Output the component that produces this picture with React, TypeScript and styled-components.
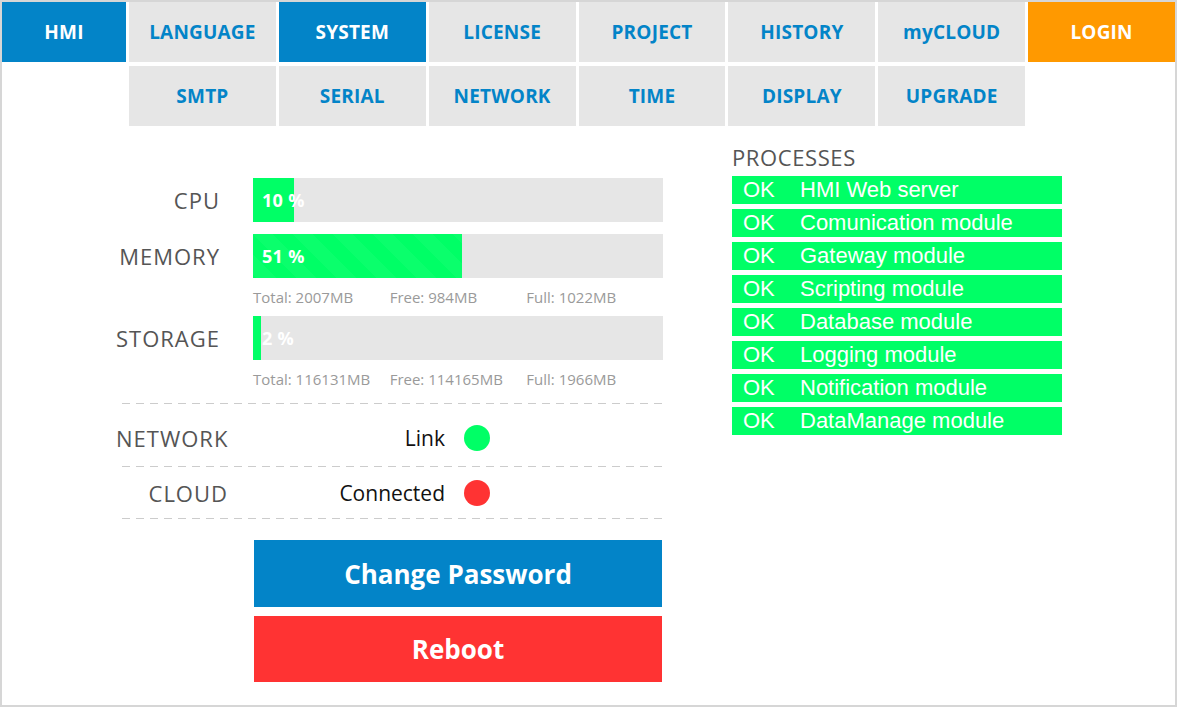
import React, { FC } from "react";
import styled, { createGlobalStyle, css } from "styled-components";

const GlobalStyle = createGlobalStyle`
  html, body {
    margin: 0;
    padding: 0;
    background: #ffffff;
  }
  body {
    font-family: "Open Sans", "Liberation Sans", sans-serif;
  }
`;

const BLUE = "#0384c8";
const GREEN = "#00ff66";
const RED = "#ff3333";

const Frame = styled.div`
  width: 1177px;
  height: 707px;
  box-sizing: border-box;
  border: 2px solid #d6d6d6;
  overflow: hidden;
`;

const Nav = styled.nav`
  display: grid;
  grid-template-columns: 124px repeat(7, 1fr);
  grid-auto-rows: 60px;
  gap: 4px 3px;
`;

type TabKind = "default" | "active" | "login";

const Tab = styled.div<{ $kind: TabKind; $start?: number }>`
  display: flex;
  align-items: center;
  justify-content: center;
  font-size: 19px;
  font-weight: 700;
  letter-spacing: 0.2px;
  background: #e6e6e6;
  color: ${BLUE};
  ${({ $start }) => $start && css`grid-column-start: ${$start};`}
  ${({ $kind }) =>
    $kind === "active" &&
    css`
      background: ${BLUE};
      color: #ffffff;
    `}
  ${({ $kind }) =>
    $kind === "login" &&
    css`
      background: #ff9900;
      color: #ffffff;
    `}
`;

const Main = styled.main`
  display: flex;
  align-items: flex-start;
`;

const LeftPanel = styled.section`
  margin: 52px 0 0 114px;
  width: 547px;
`;

const Metrics = styled.div`
  display: grid;
  grid-template-columns: 104px 410px;
  column-gap: 33px;
`;

const MeterLabel = styled.div<{ $gap?: number }>`
  align-self: center;
  text-align: right;
  white-space: nowrap;
  font-size: 22px;
  letter-spacing: 1px;
  color: #555555;
  margin-bottom: ${({ $gap }) => $gap ?? 0}px;
`;

const Track = styled.div<{ $gap?: number }>`
  position: relative;
  display: flex;
  height: 44px;
  background: #e6e6e6;
  margin-bottom: ${({ $gap }) => $gap ?? 0}px;
`;

const Fill = styled.div<{ $striped?: boolean }>`
  height: 100%;
  background-color: ${GREEN};
  ${({ $striped }) =>
    $striped &&
    css`
      background-image: linear-gradient(
        45deg,
        rgba(255, 255, 255, 0.04) 25%,
        transparent 25%,
        transparent 50%,
        rgba(255, 255, 255, 0.04) 50%,
        rgba(255, 255, 255, 0.04) 75%,
        transparent 75%,
        transparent
      );
      background-size: 40px 40px;
    `}
`;

const Percent = styled.span`
  position: absolute;
  left: 9px;
  top: 50%;
  transform: translateY(-50%);
  color: #ffffff;
  font-size: 18px;
  font-weight: 700;
  letter-spacing: 0.3px;
`;

const Stats = styled.div`
  grid-column: 2;
  display: grid;
  grid-template-columns: repeat(3, 1fr);
  align-items: center;
  height: 38px;
  font-size: 15px;
  color: #9a9a9a;
`;

const Separator = styled.div<{ $top?: number }>`
  height: 1px;
  margin: ${({ $top }) => $top ?? 0}px 0 0 6px;
  background-image: repeating-linear-gradient(
    to right,
    #cccccc 0 8px,
    transparent 8px 14px
  );
`;

const StatusRow = styled.div<{ $height: number; $shift?: number }>`
  display: grid;
  grid-template-columns: 112px 198px 26px;
  column-gap: 19px;
  align-items: center;
  box-sizing: border-box;
  height: ${({ $height }) => $height}px;
  padding-top: ${({ $shift }) => $shift ?? 0}px;
`;

const StatusLabel = styled.div`
  text-align: right;
  white-space: nowrap;
  font-size: 22px;
  letter-spacing: 1px;
  color: #555555;
`;

const StatusValue = styled.div`
  text-align: right;
  font-size: 21px;
  color: #111111;
`;

const Dot = styled.span<{ $ok: boolean }>`
  width: 26px;
  height: 26px;
  border-radius: 50%;
  background: ${({ $ok }) => ($ok ? GREEN : RED)};
`;

const Actions = styled.div`
  display: flex;
  flex-direction: column;
  gap: 9px;
  margin: 21px 0 0 138px;
  width: 408px;
`;

const ActionButton = styled.button<{ $danger?: boolean }>`
  height: ${({ $danger }) => ($danger ? 66 : 67)}px;
  border: none;
  padding: 0;
  font-family: inherit;
  font-size: 26px;
  font-weight: 700;
  color: #ffffff;
  background: ${({ $danger }) => ($danger ? RED : BLUE)};
  cursor: pointer;
`;

const RightPanel = styled.section`
  margin: 18px 0 0 69px;
  width: 330px;
`;

const PanelTitle = styled.h2`
  margin: 0 0 6px;
  font-size: 22px;
  font-weight: 400;
  letter-spacing: 0.6px;
  line-height: 26px;
  color: #555555;
`;

const ProcessList = styled.ul`
  list-style: none;
  margin: 0;
  padding: 0;
  display: flex;
  flex-direction: column;
  gap: 5px;
`;

const ProcessItem = styled.li`
  display: grid;
  grid-template-columns: 57px 1fr;
  align-items: center;
  height: 28px;
  padding-left: 11px;
  background: ${GREEN};
  color: #ffffff;
  font-family: "Liberation Sans", Arial, sans-serif;
  font-size: 22px;
`;

const topTabs: { label: string; kind: TabKind }[] = [
  { label: "HMI", kind: "active" },
  { label: "LANGUAGE", kind: "default" },
  { label: "SYSTEM", kind: "active" },
  { label: "LICENSE", kind: "default" },
  { label: "PROJECT", kind: "default" },
  { label: "HISTORY", kind: "default" },
  { label: "myCLOUD", kind: "default" },
  { label: "LOGIN", kind: "login" },
];

const subTabs = ["SMTP", "SERIAL", "NETWORK", "TIME", "DISPLAY", "UPGRADE"];

const processes = [
  "HMI Web server",
  "Comunication module",
  "Gateway module",
  "Scripting module",
  "Database module",
  "Logging module",
  "Notification module",
  "DataManage module",
];

interface MeterProps {
  label: string;
  value: number;
  striped?: boolean;
  gap?: number;
}

const Meter: FC<MeterProps> = ({ label, value, striped, gap }) => (
  <>
    <MeterLabel $gap={gap}>{label}</MeterLabel>
    <Track $gap={gap}>
      <Fill $striped={striped} style={{ width: `${value}%` }} />
      <Percent>{value} %</Percent>
    </Track>
  </>
);

export default function App() {
  return (
    <>
      <GlobalStyle />
      <Frame>
        {/* Top menu */}
        <Nav>
          {topTabs.map((t) => (
            <Tab key={t.label} $kind={t.kind}>
              {t.label}
            </Tab>
          ))}
          {subTabs.map((label, i) => (
            <Tab key={label} $kind="default" $start={i === 0 ? 2 : undefined}>
              {label}
            </Tab>
          ))}
        </Nav>

        <Main>
          <LeftPanel>
            <Metrics>
              <Meter label="CPU" value={10} gap={12} />
              <Meter label="MEMORY" value={51} striped />
              <Stats>
                <span>Total: 2007MB</span>
                <span>Free: 984MB</span>
                <span>Full: 1022MB</span>
              </Stats>
              <Meter label="STORAGE" value={2} />
              <Stats>
                <span>Total: 116131MB</span>
                <span>Free: 114165MB</span>
                <span>Full: 1966MB</span>
              </Stats>
            </Metrics>

            <Separator $top={5} />
            <StatusRow $height={62} $shift={5}>
              <StatusLabel>NETWORK</StatusLabel>
              <StatusValue>Link</StatusValue>
              <Dot $ok />
            </StatusRow>
            <Separator />
            <StatusRow $height={51}>
              <StatusLabel>CLOUD</StatusLabel>
              <StatusValue>Connected</StatusValue>
              <Dot $ok={false} />
            </StatusRow>
            <Separator />

            <Actions>
              <ActionButton>Change Password</ActionButton>
              <ActionButton $danger>Reboot</ActionButton>
            </Actions>
          </LeftPanel>

          <RightPanel>
            <PanelTitle>PROCESSES</PanelTitle>
            <ProcessList>
              {processes.map((p) => (
                <ProcessItem key={p}>
                  <span>OK</span>
                  <span>{p}</span>
                </ProcessItem>
              ))}
            </ProcessList>
          </RightPanel>
        </Main>
      </Frame>
    </>
  );
}
